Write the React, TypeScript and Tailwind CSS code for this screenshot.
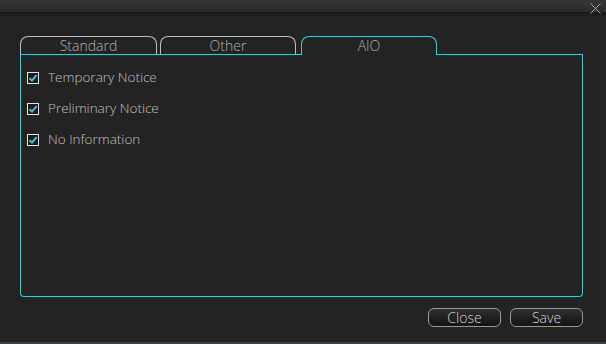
import React from 'react';

const font = { fontFamily: '"Open Sans", "Noto Sans", sans-serif' };

function Check({ label }: { label: string }) {
  return (
    <div className="flex items-center h-[12px] gap-[9px]">
      <div className="w-[12px] h-[12px] border border-[#e4e4e4] bg-[#1c1c1c] flex items-center justify-center">
        <svg width="10" height="10" viewBox="0 0 10 10">
          <path d="M1.5 5.2 L4 7.6 L8.6 2.2" fill="none" stroke="#4bc3cc" strokeWidth="2" />
        </svg>
      </div>
      <span className="text-[13.5px] leading-none font-light text-[#c2c2c2]">{label}</span>
    </div>
  );
}

function Button({ label }: { label: string }) {
  return (
    <button className="w-[73px] h-[19px] rounded-[6px] border border-[#9a9a9a] bg-gradient-to-b from-[#2f2f2f] to-[#141414] text-[14px] leading-none font-light text-[#d4d4d4] flex items-center justify-center">
      {label}
    </button>
  );
}

export default function App() {
  return (
    <div className="w-[606px] h-[344px] bg-[#232323] flex flex-col overflow-hidden" style={font}>
      {/* title bar */}
      <div className="relative h-[16px] flex flex-col">
        <div className="h-[12px] bg-gradient-to-b from-[#363636] to-[#2b2b2b]" />
        <div className="h-[4px] bg-gradient-to-b from-[#1a1a1a] to-[#202020]" />
        <svg width="11" height="11" viewBox="0 0 11 11" className="absolute right-[5px] top-[3px]">
          <path d="M0.5 0.5 L10.5 10.5 M10.5 0.5 L0.5 10.5" stroke="#a4a4a4" strokeWidth="1" />
        </svg>
      </div>

      <div className="flex-1 flex flex-col pl-[20px] pr-[23px] pt-[20px]">
        {/* tabs */}
        <div className="flex h-[19px]">
          <div className="flex w-[281px] border-b border-[#4ec3ca] gap-[3px]">
            <div className="w-[137px] h-[18px] border-t border-x border-[#bdbdbd] rounded-t-[8px] flex items-center justify-center text-[14px] leading-none font-light text-[#b0b0b0]">
              Standard
            </div>
            <div className="w-[136px] h-[18px] border-t border-x border-[#bdbdbd] rounded-t-[8px] flex items-center justify-center text-[14px] leading-none font-light text-[#b0b0b0]">
              Other
            </div>
          </div>
          <div className="w-[136px] h-[19px] border-t border-x border-[#4ec3ca] rounded-t-[8px] flex items-center justify-center text-[14px] leading-none font-light text-[#b0b0b0] pb-[1px]">
            AIO
          </div>
          <div className="flex-1 border-b border-[#4ec3ca]" />
        </div>

        {/* panel */}
        <div className="h-[242px] border-x border-b border-[#4ec3ca] rounded-b-[4px] pl-[6px] pt-[17px] flex flex-col gap-[19px]">
          <Check label="Temporary Notice" />
          <Check label="Preliminary Notice" />
          <Check label="No Information" />
        </div>

        {/* buttons */}
        <div className="flex justify-end gap-[9px] mt-[11px]">
          <Button label="Close" />
          <Button label="Save" />
        </div>
      </div>
      <div className="h-[2px] bg-[#3b4146]" />
    </div>
  );
}
